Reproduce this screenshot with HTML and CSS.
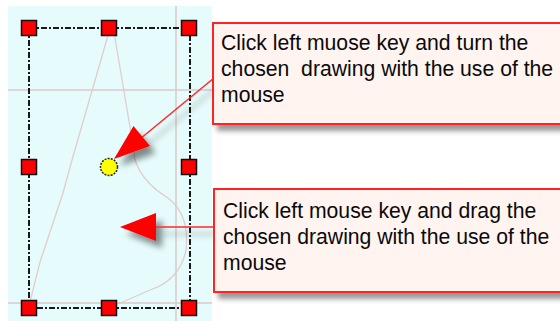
FILE: index.html
```html
<!DOCTYPE html>
<html lang="en">
<head>
    <meta charset="UTF-8">
    <title>Rotate and move drawing</title>
    <link rel="stylesheet" href="styles.css">
</head>
<body>
    <div class="stage">
        <svg class="canvas" width="560" height="321" viewBox="0 0 560 321">
            <defs>
                <filter id="shade" x="-30%" y="-30%" width="180%" height="180%">
                    <feGaussianBlur in="SourceAlpha" stdDeviation="3"/>
                    <feOffset dx="6" dy="7" result="blur"/>
                    <feComponentTransfer><feFuncA type="linear" slope="0.45"/></feComponentTransfer>
                    <feMerge><feMergeNode/><feMergeNode in="SourceGraphic"/></feMerge>
                </filter>
            </defs>

            <!-- drawing area -->
            <rect x="8" y="6" width="204" height="315" fill="#e6fcfc"/>
            <g stroke="#dcc9c9" stroke-width="1.5">
                <line x1="176" y1="6" x2="176" y2="321"/>
                <line x1="8" y1="90" x2="212" y2="90"/>
                <line x1="8" y1="303" x2="212" y2="303"/>
            </g>

            <!-- the chosen drawing -->
            <g fill="none" stroke="#e2cccc" stroke-width="1.3">
                <path d="M109 32 L72 160 L63 193 L40 262 L30 302"/>
                <path d="M114 32 L130 127 L135 160 Q142 182 168 198 Q190 215 186 250 Q180 280 150 290 L118 304"/>
            </g>

            <!-- selection frame -->
            <rect x="29" y="28" width="161" height="280" fill="none" stroke="#1a1a1a" stroke-width="2" stroke-dasharray="6 2 2 2"/>
            <g fill="#ff0000" stroke="#111" stroke-width="1.5">
                <rect x="21.5" y="20.5" width="15" height="15"/>
                <rect x="101.5" y="20.5" width="15" height="15"/>
                <rect x="181.5" y="20.5" width="15" height="15"/>
                <rect x="21.5" y="159.5" width="15" height="15"/>
                <rect x="181.5" y="159.5" width="15" height="15"/>
                <rect x="21.5" y="300.5" width="15" height="15"/>
                <rect x="101.5" y="300.5" width="15" height="15"/>
                <rect x="181.5" y="300.5" width="15" height="15"/>
            </g>
            <circle cx="109" cy="167" r="8.5" fill="#ffff00" stroke="#222" stroke-width="1.5" stroke-dasharray="2 1.2"/>

            <!-- pointers -->
            <g filter="url(#shade)">
                <line x1="214" y1="78" x2="140" y2="139" stroke="#ff2a2a" stroke-width="1.6"/>
                <polygon points="114,159 133.5,126 150,146" fill="#ff0000"/>
            </g>
            <g filter="url(#shade)">
                <line x1="214" y1="227" x2="154" y2="227" stroke="#ff2a2a" stroke-width="1.6"/>
                <polygon points="120,227 156,213 156,241" fill="#ff0000"/>
            </g>
        </svg>

        <div class="note note-turn">
            Click left muose key and turn the<br>
            chosen&nbsp; drawing with the use of the<br>
            mouse
        </div>
        <div class="note note-drag">
            Click left mouse key and drag the<br>
            chosen drawing with the use of the<br>
            mouse
        </div>
    </div>
</body>
</html>
```

FILE: styles.css
```css
body {
    margin: 0;
    background-color: #ffffff;
    font-family: "Liberation Sans", Arial, sans-serif;
    overflow: hidden;
}
.stage {
    position: relative;
    width: 560px;
    height: 321px;
    overflow: hidden;
}
.canvas {
    display: block;
}
.note {
    position: absolute;
    width: 360px;
    height: 84px;
    padding: 6px 8px 9px 7px;
    background-color: #fff4ef;
    border: 2px solid #ff2424;
    box-shadow: 5px 6px 5px rgba(0, 0, 0, 0.4);
    color: #0a0a0a;
    font-size: 21.2px;
    line-height: 26px;
    white-space: nowrap;
}
.note-turn {
    left: 212px;
    top: 22px;
}
.note-drag {
    left: 213px;
    top: 188px;
    padding-top: 8px;
    padding-left: 8px;
}
```
